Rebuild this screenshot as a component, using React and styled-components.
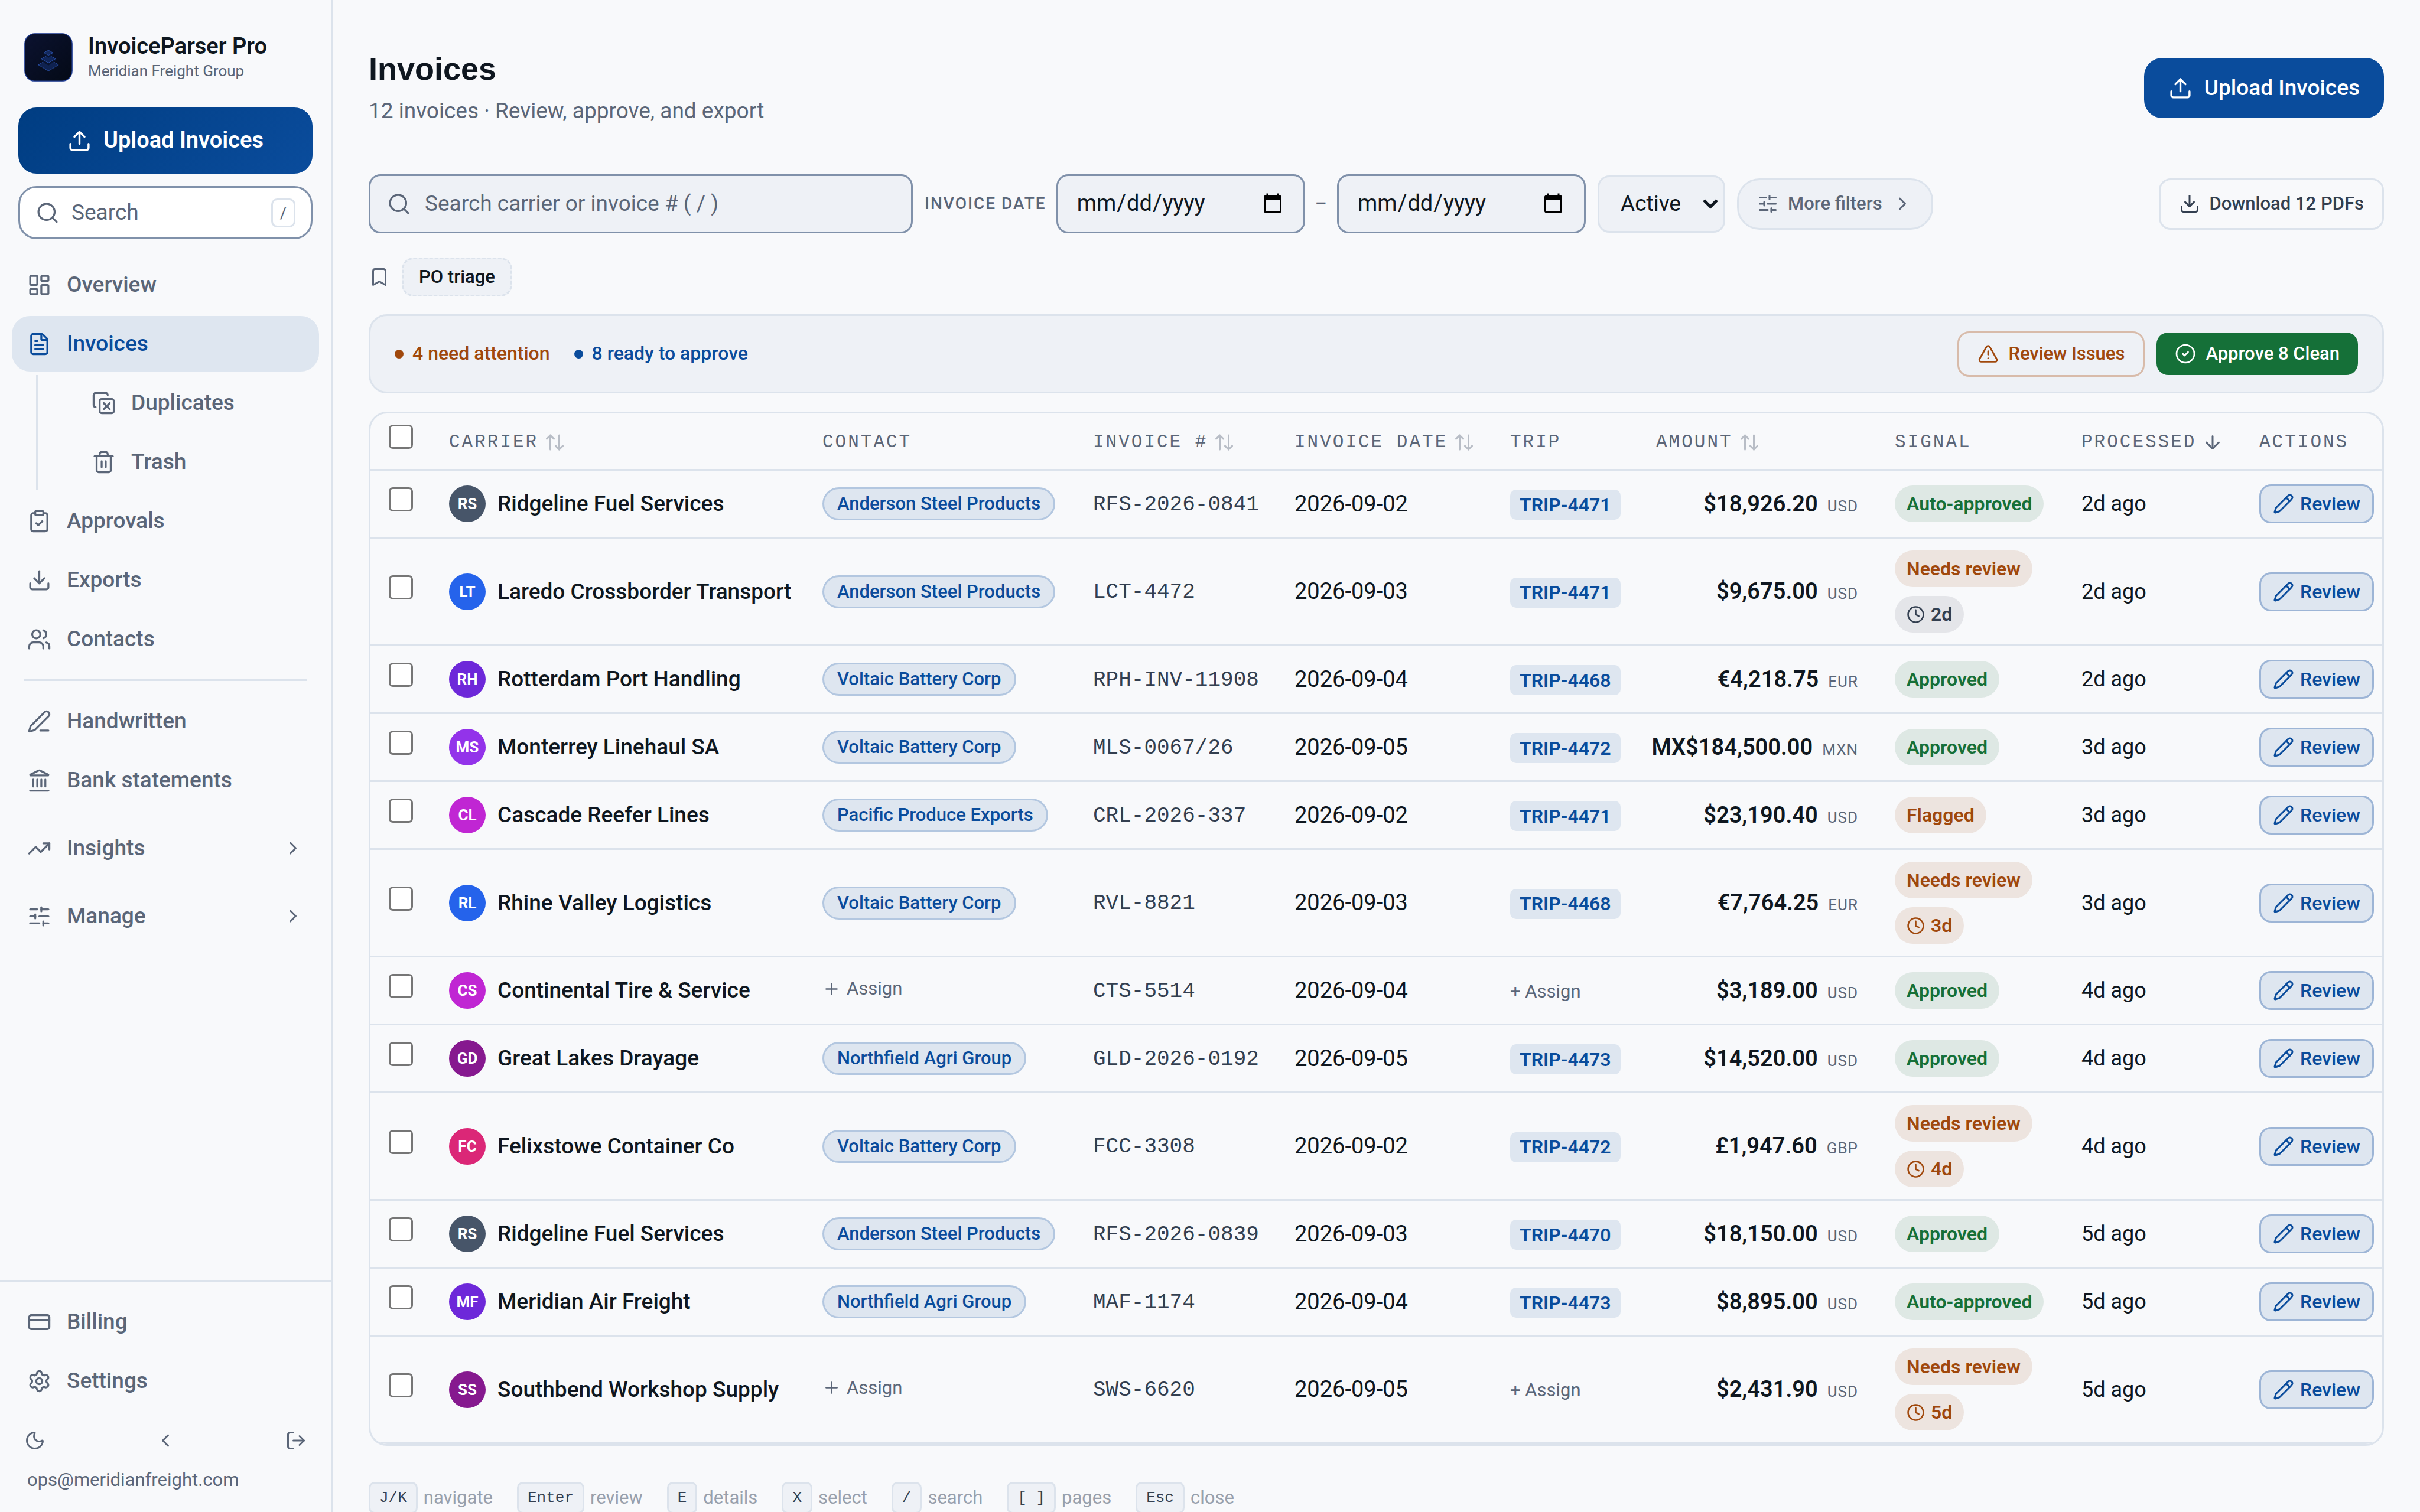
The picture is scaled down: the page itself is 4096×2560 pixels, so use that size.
import React from 'react';
import styled, { createGlobalStyle, css } from 'styled-components';
import {
  ArrowDown, ArrowUpDown, Bookmark, ChevronLeft, ChevronRight, CircleCheck,
  ClipboardCheck, Clock, CopyX, CreditCard, Download, FileText, Landmark,
  LayoutDashboard, LogOut, Moon, Pencil, PenLine, Plus, Search, Settings,
  SlidersHorizontal, Trash2, TrendingUp, TriangleAlert, Upload, Users,
} from 'lucide-react';

const c = {
  page: '#f8f9fb',
  subtle: '#eef1f6',
  line: '#dce3ec',
  field: '#8091aa',
  ink: '#0f1720',
  body: '#333f50',
  muted: '#5b6678',
  blue: '#0a4c9c',
  blueSoft: '#dee6f0',
  orange: '#a0480c',
  orangeSoft: '#ede4df',
  green: '#157038',
  greenSoft: '#dee8e4',
  greySoft: '#e4e5e9',
};
const sans = 'Roboto, "Liberation Sans", sans-serif';
const mono = '"Liberation Mono", monospace';

const GlobalStyle = createGlobalStyle`
  *, *::before, *::after { box-sizing: border-box; }
  body { margin: 0; background: ${c.page}; color: ${c.ink}; font: 400 37px/1.3 ${sans}; }
  button, input, select { font: inherit; color: inherit; }
  button { cursor: pointer; }
  svg { display: block; flex: none; }
`;

const Shell = styled.div`
  display: flex;
  height: 100vh;
  overflow: hidden;
`;

/* Sidebar */
const Sidebar = styled.aside`
  display: flex;
  flex-direction: column;
  flex: 0 0 563px;
  border-right: 3px solid ${c.line};
`;
const Brand = styled.div`
  display: flex;
  gap: 26px;
  padding: 56px 41px 42px;
`;
const BrandName = styled.div`
  font-size: 38px;
  line-height: 44px;
  font-weight: 600;
`;
const BrandOrg = styled.div`
  font-size: 26px;
  line-height: 40px;
  color: ${c.muted};
`;
const SidebarActions = styled.div`
  display: flex;
  flex-direction: column;
  gap: 21px;
  padding: 0 31px;
`;
const UploadButton = styled.button`
  display: flex;
  align-items: center;
  justify-content: center;
  gap: 20px;
  height: ${(p) => (p.$wide ? 112 : 102)}px;
  padding: 0 41px;
  border: 0;
  border-radius: 31px;
  background: ${(p) => (p.$wide ? `linear-gradient(135deg, #003d82, ${c.blue})` : c.blue)};
  color: #fff;
  font-size: ${(p) => (p.$wide ? 38 : 37)}px;
  font-weight: ${(p) => (p.$wide ? 600 : 500)};
`;
const QuickSearch = styled.button`
  display: flex;
  align-items: center;
  gap: 20px;
  height: 90px;
  padding: 0 26px;
  border: 3px solid ${c.field};
  border-radius: 31px;
  background: #fff;
  color: ${c.muted};
  text-align: left;
`;
const SlashKey = styled.kbd`
  display: grid;
  place-items: center;
  width: 41px;
  height: 49px;
  margin-left: auto;
  border: 3px solid ${c.line};
  border-radius: 10px;
  font: 28px ${sans};
`;
const Nav = styled.nav`
  display: flex;
  flex-direction: column;
  gap: 6px;
  padding: 30px 20px 0;
`;
const NavLink = styled.a`
  display: flex;
  align-items: center;
  gap: 26px;
  height: 94px;
  padding: 0 26px;
  border-radius: 31px;
  color: ${(p) => (p.$active ? c.blue : c.muted)};
  background: ${(p) => (p.$active ? c.blueSoft : 'transparent')};
  font-weight: 500;
  text-decoration: none;
  svg:nth-of-type(2) { margin-left: auto; }
`;
const NavGroup = styled.div`
  margin-top: 15px;
`;
const SubNav = styled.div`
  display: flex;
  flex-direction: column;
  gap: 6px;
  margin-left: 41px;
  padding-left: 65px;
  border-left: 3px solid ${c.line};
`;
const NavRule = styled.hr`
  width: calc(100% - 41px);
  height: 3px;
  margin: 15px auto;
  border: 0;
  background: ${c.line};
`;
const SidebarFooter = styled.div`
  display: flex;
  flex-direction: column;
  gap: 6px;
  margin-top: auto;
  padding: 20px 20px 31px;
  border-top: 3px solid ${c.line};
`;
const FooterTools = styled.div`
  display: flex;
  justify-content: space-between;
  margin-top: 12px;
  padding: 0 21px;
`;
const IconButton = styled.button`
  display: grid;
  place-items: center;
  height: 72px;
  padding: 0;
  border: 0;
  background: none;
  color: ${c.muted};
`;
const Account = styled.div`
  padding: 2px 0 0 26px;
  font-size: 31px;
  line-height: 46px;
  color: ${c.muted};
`;

/* Main column */
const Main = styled.main`
  flex: 1;
  min-width: 0;
  padding: 82px 61px 61px;
  overflow-y: auto;
  scrollbar-width: none;
`;
const PageHeader = styled.header`
  display: flex;
  align-items: center;
  justify-content: space-between;
  margin-bottom: 79px;
`;
const Title = styled.h1`
  margin: 0 0 10px;
  font: 700 54px/68px "Liberation Sans", sans-serif;
`;
const Subtitle = styled.p`
  margin: 0;
  line-height: 56px;
  color: ${c.muted};
`;
const Toolbar = styled.div`
  display: flex;
  align-items: center;
  gap: 20px;
  margin-bottom: 41px;
`;
const fieldBox = css`
  height: 100px;
  border: 3px solid ${c.field};
  border-radius: 20px;
  background: ${c.subtle};
`;
const SearchField = styled.label`
  ${fieldBox}
  display: flex;
  align-items: center;
  gap: 23px;
  flex: 0 1 921px;
  padding: 0 28px;
  color: ${c.muted};
  input {
    flex: 1;
    min-width: 0;
    padding: 0;
    border: 0;
    outline: 0;
    background: none;
  }
  input::placeholder { color: ${c.muted}; opacity: 1; }
`;
const DateRange = styled.div`
  display: flex;
  align-items: center;
  gap: 17px;
  color: ${c.muted};
  font-size: 31px;
`;
const DateLabel = styled.label`
  font-size: 28px;
  font-weight: 500;
  letter-spacing: 2px;
  text-transform: uppercase;
  white-space: nowrap;
`;
const DateInput = styled.input`
  ${fieldBox}
  width: 421px;
  padding: 0 31px;
  color: ${c.ink};
  font-size: 38px;
`;
const SelectBox = styled.div`
  display: grid;
  align-items: center;
  width: 216px;
  > * { grid-area: 1 / 1; }
  svg { justify-self: end; margin-right: 10px; pointer-events: none; }
`;
const Select = styled.select`
  width: 100%;
  min-width: 0;
  height: 97px;
  padding: 0 36px;
  border: 3px solid ${c.line};
  border-radius: 20px;
  background: ${c.subtle};
  appearance: none;
`;
const tones = {
  quiet: css`background: ${c.subtle}; border-color: ${c.line}; color: ${c.muted}; border-radius: 38px;`,
  plain: css`background: none; border-color: ${c.line}; color: ${c.body};`,
  warn: css`background: none; border-color: #d8bbaa; color: ${c.orange};`,
  go: css`background: ${c.green}; border: 0; color: #fff; padding: 0 31px;`,
};
const Button = styled.button`
  display: flex;
  align-items: center;
  gap: 16px;
  height: ${(p) => p.$height}px;
  padding: 0 31px;
  border: 3px solid;
  border-radius: 20px;
  font-size: 31px;
  font-weight: 500;
  white-space: nowrap;
  ${(p) => tones[p.$tone]}
`;
const Push = styled.div`
  margin-left: auto;
`;
const SavedViews = styled.div`
  display: flex;
  align-items: center;
  gap: 20px;
  margin-bottom: 30px;
  color: ${c.muted};
`;
const ViewChip = styled.button`
  height: 66px;
  padding: 0 26px;
  border: 3px dashed ${c.line};
  border-radius: 20px;
  background: ${c.subtle};
  color: ${c.ink};
  font-size: 31px;
  font-weight: 500;
`;
const Triage = styled.section`
  display: flex;
  align-items: center;
  gap: 41px;
  height: 134px;
  margin-bottom: 31px;
  padding: 0 41px;
  border: 3px solid ${c.line};
  border-radius: 31px;
  background: ${c.subtle};
`;
const Stat = styled.div`
  display: flex;
  align-items: center;
  gap: 15px;
  color: ${(p) => p.$color};
  font-size: 32px;
  font-weight: 500;
  &::before {
    content: '';
    width: 15px;
    height: 15px;
    border-radius: 50%;
    background: currentColor;
  }
`;
const TriageActions = styled.div`
  display: flex;
  align-items: center;
  gap: 20px;
  margin-left: auto;
`;

/* Table */
const TableFrame = styled.div`
  border: 3px solid ${c.line};
  border-radius: 31px;
  overflow: hidden;
`;
const Table = styled.table`
  width: 100%;
  table-layout: fixed;
  border-collapse: separate;
  border-spacing: 0;
`;
const Col = styled.col`
  width: ${(p) => (p.$width ? `${p.$width}px` : 'auto')};
`;
const Th = styled.th`
  height: 97px;
  padding: ${(p) => (p.$check ? '0 0 15px 31px' : '3px 0 0 31px')};
  border-bottom: 3px solid ${c.line};
  color: ${c.muted};
  font: 400 31px ${mono};
  letter-spacing: 3px;
  text-align: left;
  text-transform: uppercase;
  white-space: nowrap;
`;
const SortButton = styled.button`
  display: flex;
  align-items: center;
  gap: 10px;
  padding: 0;
  border: 0;
  background: none;
  letter-spacing: inherit;
  text-transform: inherit;
  svg { opacity: ${(p) => (p.$sorted ? 1 : 0.4)}; }
`;
const cellPadding = {
  check: '0 0 15px 31px',
  unassigned: '0 0 6px 31px',
  trip: '3px 0 0 31px',
  amount: '3px 31px 0 0',
  base: '20px 0 20px 31px',
};
const Td = styled.td`
  height: 115px;
  padding: ${(p) => cellPadding[p.$kind || 'base']};
  border-bottom: 3px solid ${c.line};
  text-align: ${(p) => (p.$kind === 'amount' ? 'right' : 'left')};
  font-size: 36px;
  line-height: 46px;
  white-space: nowrap;
`;
const Checkbox = styled.input.attrs({ type: 'checkbox' })`
  display: block;
  width: 41px;
  height: 41px;
  margin: 0;
  border: 3px solid #767676;
  border-radius: 7px;
  background: #fff;
  appearance: none;
`;
const Carrier = styled.div`
  display: flex;
  align-items: center;
  gap: 20px;
  font-size: 37px;
  font-weight: 500;
`;
const Avatar = styled.span`
  display: grid;
  place-items: center;
  width: 62px;
  height: 62px;
  border-radius: 50%;
  background: ${(p) => p.$color};
  color: #fff;
  font-size: 26px;
  font-weight: 700;
`;
const ContactChip = styled.button`
  display: flex;
  align-items: center;
  height: 56px;
  padding: 0 22px;
  border: 3px solid #b3c7e0;
  border-radius: 28px;
  background: ${c.blueSoft};
  color: ${c.blue};
  font-size: 31px;
  font-weight: 500;
`;
const Assign = styled.button`
  display: flex;
  align-items: center;
  gap: 10px;
  padding: 0;
  border: 0;
  background: none;
  color: ${c.muted};
  font-size: 31px;
`;
const InvoiceNo = styled.span`
  color: ${c.body};
  font-family: ${mono};
`;
const Figures = styled.span`
  font-size: 38px;
  font-weight: ${(p) => (p.$strong ? 600 : 400)};
`;
const Currency = styled.span`
  margin-left: 16px;
  color: ${c.muted};
  font-size: 26px;
  letter-spacing: 1px;
`;
const TripTag = styled.a`
  display: flex;
  align-items: center;
  width: max-content;
  height: 51px;
  padding: 0 16px;
  border-radius: 10px;
  background: ${c.blueSoft};
  color: ${c.blue};
  font-size: 32px;
  font-weight: 600;
  text-decoration: none;
`;
const Signals = styled.div`
  display: flex;
  flex-direction: column;
  align-items: flex-start;
  gap: 15px;
`;
const badgeTones = {
  green: [c.greenSoft, c.green],
  orange: [c.orangeSoft, c.orange],
  grey: [c.greySoft, c.body],
};
const Badge = styled.span`
  display: flex;
  align-items: center;
  gap: 10px;
  height: 62px;
  padding: 0 20px;
  border-radius: 31px;
  background: ${(p) => badgeTones[p.$tone][0]};
  color: ${(p) => badgeTones[p.$tone][1]};
  font-size: 32px;
  font-weight: 600;
`;
const ReviewButton = styled.button`
  display: flex;
  align-items: center;
  gap: 10px;
  height: 66px;
  padding: 0 20px;
  border: 3px solid #9db5d6;
  border-radius: 20px;
  background: ${c.blueSoft};
  color: ${c.blue};
  font-size: 32px;
  font-weight: 500;
`;
const Hints = styled.footer`
  display: flex;
  gap: 41px;
  margin-top: 61px;
  color: #98a0ac;
  font-size: 31px;
`;
const Hint = styled.span`
  display: flex;
  align-items: center;
  gap: 10px;
`;
const Key = styled.kbd`
  height: 54px;
  padding: 0 15px;
  border: 3px solid ${c.line};
  border-radius: 10px;
  background: ${c.subtle};
  color: ${c.body};
  font: 26px/48px ${mono};
  white-space: pre;
`;

function Logo() {
  return (
    <svg width="82" height="82" viewBox="0 0 96 96" aria-hidden="true">
      <defs>
        <linearGradient id="tile" x1="0" y1="0" x2="1" y2="1">
          <stop offset="0" stopColor="#0b1230" />
          <stop offset="1" stopColor="#040a16" />
        </linearGradient>
      </defs>
      <rect x="1" y="1" width="94" height="94" rx="20" fill="url(#tile)" stroke="#24429a" strokeWidth="1.6" />
      <g stroke="#2a4fa8" strokeWidth="1.1" strokeLinejoin="round">
        <path d="M28 67l20 12 20-12-20-12z" fill="#070e20" stroke="none" />
        <path d="M48 51l20 12-20 12-20-12z" fill="#0f2250" />
        <path d="M34 55l14 9 14-9v-4H34z" fill="#091430" stroke="none" />
        <path d="M48 43l14 8-14 8-14-8z" fill="#10265a" />
        <path d="M39 43l9 6 9-6v-4H39z" fill="#091430" stroke="none" />
        <path d="M48 34l9 5-9 5-9-5z" fill="#142a5e" />
      </g>
    </svg>
  );
}

const navIcon = { size: 41, strokeWidth: 1.9 };
const smallIcon = { size: 36, strokeWidth: 2 };

function NavItem({ icon: Icon, label, active, expandable }) {
  return (
    <NavLink href="#" $active={active} aria-current={active ? 'page' : undefined}>
      <Icon {...navIcon} />
      {label}
      {expandable && <ChevronRight {...smallIcon} />}
    </NavLink>
  );
}

const columns = [
  { label: 'Carrier', sort: true, width: 632 },
  { label: 'Contact', width: 458 },
  { label: 'Invoice #', sort: true, width: 341 },
  { label: 'Invoice date', sort: true, width: 365 },
  { label: 'Trip', width: 247 },
  { label: 'Amount', sort: true, width: 404 },
  { label: 'Signal', width: 316 },
  { label: 'Processed', sort: true, sorted: true, width: 301 },
  { label: 'Actions' },
];

const invoices = [
  ['RS', '#475569', 'Ridgeline Fuel Services', 'Anderson Steel Products', 'RFS-2026-0841', '2026-09-02', 'TRIP-4471', '$18,926.20', 'USD', 'Auto-approved', '2d'],
  ['LT', '#2563eb', 'Laredo Crossborder Transport', 'Anderson Steel Products', 'LCT-4472', '2026-09-03', 'TRIP-4471', '$9,675.00', 'USD', 'Needs review', '2d', 'grey'],
  ['RH', '#6d28d9', 'Rotterdam Port Handling', 'Voltaic Battery Corp', 'RPH-INV-11908', '2026-09-04', 'TRIP-4468', '€4,218.75', 'EUR', 'Approved', '2d'],
  ['MS', '#9333ea', 'Monterrey Linehaul SA', 'Voltaic Battery Corp', 'MLS-0067/26', '2026-09-05', 'TRIP-4472', 'MX$184,500.00', 'MXN', 'Approved', '3d'],
  ['CL', '#c026d3', 'Cascade Reefer Lines', 'Pacific Produce Exports', 'CRL-2026-337', '2026-09-02', 'TRIP-4471', '$23,190.40', 'USD', 'Flagged', '3d'],
  ['RL', '#2563eb', 'Rhine Valley Logistics', 'Voltaic Battery Corp', 'RVL-8821', '2026-09-03', 'TRIP-4468', '€7,764.25', 'EUR', 'Needs review', '3d', 'orange'],
  ['CS', '#c026d3', 'Continental Tire & Service', null, 'CTS-5514', '2026-09-04', null, '$3,189.00', 'USD', 'Approved', '4d'],
  ['GD', '#86198f', 'Great Lakes Drayage', 'Northfield Agri Group', 'GLD-2026-0192', '2026-09-05', 'TRIP-4473', '$14,520.00', 'USD', 'Approved', '4d'],
  ['FC', '#db2777', 'Felixstowe Container Co', 'Voltaic Battery Corp', 'FCC-3308', '2026-09-02', 'TRIP-4472', '£1,947.60', 'GBP', 'Needs review', '4d', 'orange'],
  ['RS', '#475569', 'Ridgeline Fuel Services', 'Anderson Steel Products', 'RFS-2026-0839', '2026-09-03', 'TRIP-4470', '$18,150.00', 'USD', 'Approved', '5d'],
  ['MF', '#6d28d9', 'Meridian Air Freight', 'Northfield Agri Group', 'MAF-1174', '2026-09-04', 'TRIP-4473', '$8,895.00', 'USD', 'Auto-approved', '5d'],
  ['SS', '#86198f', 'Southbend Workshop Supply', null, 'SWS-6620', '2026-09-05', null, '$2,431.90', 'USD', 'Needs review', '5d', 'orange'],
];

function InvoiceRow({ invoice }) {
  const [initials, color, carrier, contact, number, date, trip, amount, currency, signal, age, waiting] = invoice;
  const tone = signal.toLowerCase().includes('approved') ? 'green' : 'orange';
  return (
    <tr>
      <Td $kind="check"><Checkbox aria-label={`Select ${number}`} /></Td>
      <Td><Carrier><Avatar $color={color}>{initials}</Avatar>{carrier}</Carrier></Td>
      <Td $kind={contact ? 'base' : 'unassigned'}>
        {contact
          ? <ContactChip type="button">{contact}</ContactChip>
          : <Assign type="button"><Plus size={31} strokeWidth={2} />Assign</Assign>}
      </Td>
      <Td><InvoiceNo>{number}</InvoiceNo></Td>
      <Td><Figures>{date}</Figures></Td>
      <Td $kind="trip">
        {trip ? <TripTag href="#">{trip}</TripTag> : <Assign type="button">+ Assign</Assign>}
      </Td>
      <Td $kind="amount"><Figures $strong>{amount}</Figures><Currency>{currency}</Currency></Td>
      <Td>
        <Signals>
          <Badge $tone={tone}>{signal}</Badge>
          {waiting && <Badge $tone={waiting}><Clock size={31} strokeWidth={2} />{age}</Badge>}
        </Signals>
      </Td>
      <Td>{age} ago</Td>
      <Td>
        <ReviewButton type="button"><Pencil {...smallIcon} />Review</ReviewButton>
      </Td>
    </tr>
  );
}

const shortcuts = [
  ['J/K', 'navigate'], ['Enter', 'review'], ['E', 'details'], ['X', 'select'],
  ['/', 'search'], ['[ ]', 'pages'], ['Esc', 'close'],
];

export default function App() {
  return (
    <Shell>
      <GlobalStyle />
      <Sidebar>
        <Brand>
          <Logo />
          <div>
            <BrandName>InvoiceParser Pro</BrandName>
            <BrandOrg>Meridian Freight Group</BrandOrg>
          </div>
        </Brand>
        <SidebarActions>
          <UploadButton type="button" $wide><Upload size={41} strokeWidth={2} />Upload Invoices</UploadButton>
          <QuickSearch type="button"><Search {...navIcon} />Search<SlashKey>/</SlashKey></QuickSearch>
        </SidebarActions>
        <Nav aria-label="Main">
          <NavItem icon={LayoutDashboard} label="Overview" />
          <NavItem icon={FileText} label="Invoices" active />
          <SubNav>
            <NavItem icon={CopyX} label="Duplicates" />
            <NavItem icon={Trash2} label="Trash" />
          </SubNav>
          <NavItem icon={ClipboardCheck} label="Approvals" />
          <NavItem icon={Download} label="Exports" />
          <NavItem icon={Users} label="Contacts" />
          <NavRule />
          <NavItem icon={PenLine} label="Handwritten" />
          <NavItem icon={Landmark} label="Bank statements" />
          <NavGroup><NavItem icon={TrendingUp} label="Insights" expandable /></NavGroup>
          <NavGroup><NavItem icon={SlidersHorizontal} label="Manage" expandable /></NavGroup>
        </Nav>
        <SidebarFooter>
          <NavItem icon={CreditCard} label="Billing" />
          <NavItem icon={Settings} label="Settings" />
          <FooterTools>
            <IconButton type="button" aria-label="Dark mode"><Moon {...smallIcon} /></IconButton>
            <IconButton type="button" aria-label="Collapse sidebar"><ChevronLeft {...smallIcon} /></IconButton>
            <IconButton type="button" aria-label="Log out"><LogOut {...smallIcon} /></IconButton>
          </FooterTools>
          <Account>ops@meridianfreight.com</Account>
        </SidebarFooter>
      </Sidebar>

      <Main>
        <PageHeader>
          <div>
            <Title>Invoices</Title>
            <Subtitle>12 invoices · Review, approve, and export</Subtitle>
          </div>
          <UploadButton type="button"><Upload size={41} strokeWidth={2} />Upload Invoices</UploadButton>
        </PageHeader>

        <Toolbar>
          <SearchField>
            <Search {...navIcon} />
            <input type="text" aria-label="Search invoices" placeholder="Search carrier or invoice # ( / )" />
          </SearchField>
          <DateRange>
            <DateLabel htmlFor="date-from">Invoice date</DateLabel>
            <DateInput id="date-from" type="date" />
            –
            <DateInput type="date" aria-label="Invoice date to" />
          </DateRange>
          <SelectBox>
            <Select aria-label="Status" defaultValue="Active">
              <option>Active</option>
              <option>Archived</option>
            </Select>
            <svg width="30" height="24" viewBox="0 0 30 24" fill="none" stroke={c.ink} strokeWidth="5" aria-hidden="true">
              <path d="M4 6l11 11L26 6" />
            </svg>
          </SelectBox>
          <Button type="button" $tone="quiet" $height={87}>
            <SlidersHorizontal {...smallIcon} />More filters<ChevronRight {...smallIcon} />
          </Button>
          <Push>
            <Button type="button" $tone="plain" $height={87}><Download {...smallIcon} />Download 12 PDFs</Button>
          </Push>
        </Toolbar>

        <SavedViews>
          <Bookmark {...smallIcon} />
          <ViewChip type="button">PO triage</ViewChip>
        </SavedViews>

        <Triage>
          <Stat $color={c.orange}>4 need attention</Stat>
          <Stat $color={c.blue}>8 ready to approve</Stat>
          <TriageActions>
            <Button type="button" $tone="warn" $height={77}><TriangleAlert size={36} strokeWidth={1.8} />Review Issues</Button>
            <Button type="button" $tone="go" $height={72}><CircleCheck size={36} strokeWidth={1.8} />Approve 8 Clean</Button>
          </TriageActions>
        </Triage>

        <TableFrame>
          <Table>
            <colgroup>
              <Col $width={102} />
              {columns.map((col) => <Col key={col.label} $width={col.width} />)}
            </colgroup>
            <thead>
              <tr>
                <Th $check><Checkbox aria-label="Select all" /></Th>
                {columns.map((col) => (
                  <Th key={col.label} scope="col">
                    {col.sort ? (
                      <SortButton type="button" $sorted={col.sorted}>
                        {col.label}
                        {col.sorted ? <ArrowDown {...smallIcon} /> : <ArrowUpDown {...smallIcon} />}
                      </SortButton>
                    ) : col.label}
                  </Th>
                ))}
              </tr>
            </thead>
            <tbody>
              {invoices.map((invoice) => <InvoiceRow key={invoice[4]} invoice={invoice} />)}
            </tbody>
          </Table>
        </TableFrame>

        <Hints>
          {shortcuts.map(([key, action]) => (
            <Hint key={action}><Key>{key}</Key>{action}</Hint>
          ))}
        </Hints>
      </Main>
    </Shell>
  );
}
